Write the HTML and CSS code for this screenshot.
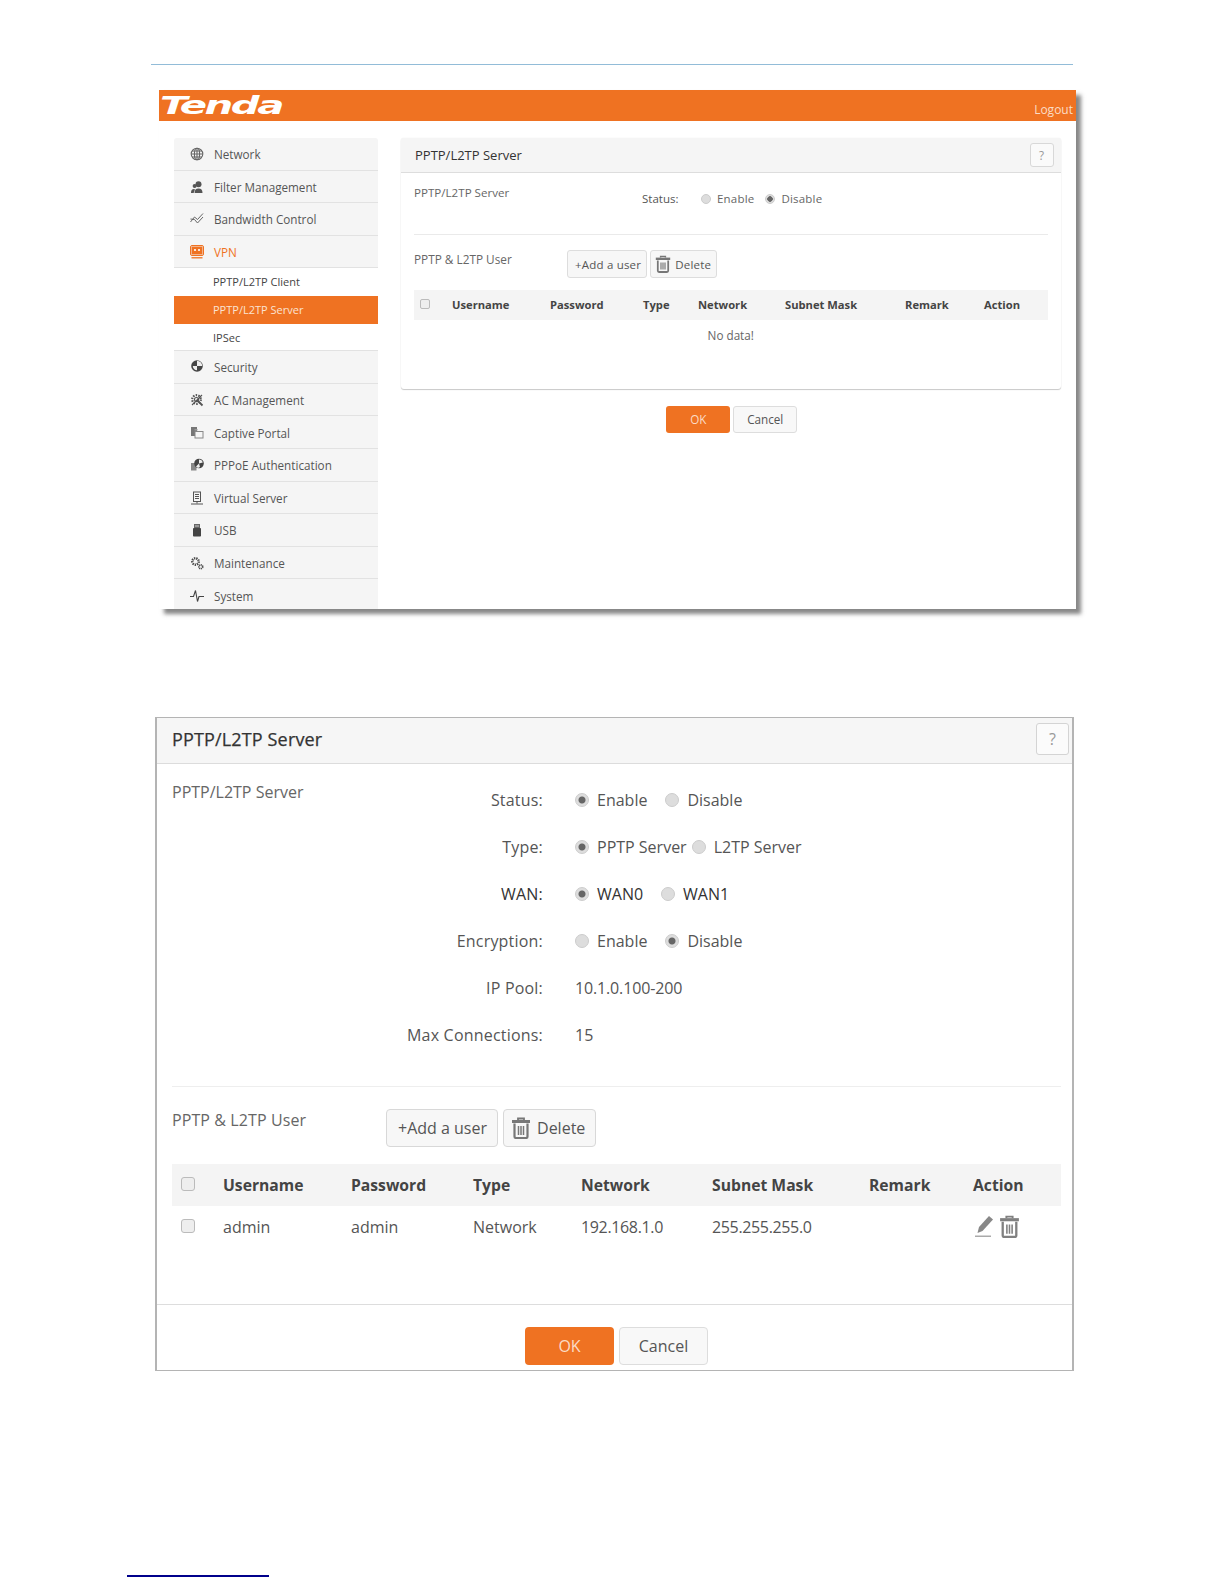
FILE: index.html
```html
<!DOCTYPE html>
<html lang="en">
<head>
<meta charset="utf-8">
<title>PPTP/L2TP Server</title>
<link rel="stylesheet" href="styles.css">
</head>
<body>
<div class="page-rule"></div>

<section class="shot">
  <header class="topbar">
    <span class="logo">Tenda</span>
    <a class="logout">Logout</a>
  </header>
  <div class="shot-body">
    <nav class="side">
      <div class="nav-item"><svg class="ic" viewBox="0 0 14 14" fill="none" stroke="#666" stroke-width="1.1"><circle cx="7" cy="7" r="5.8"/><ellipse cx="7" cy="7" rx="2.6" ry="5.8"/><path d="M1.2 7h11.6M2 4h10M2 10h10M7 1v12"/></svg>Network</div>
      <div class="nav-item"><svg class="ic" viewBox="0 0 14 14" fill="#555"><circle cx="8.5" cy="4.2" r="3"/><path d="M4.6 13c0-3 1.2-4.4 3.9-4.4s4 1.4 4 4.4z"/><circle cx="4.6" cy="6" r="2"/><path d="M1 13c0-2.6.9-4 3-4l1 .6-1.4 3.4z"/></svg>Filter Management</div>
      <div class="nav-item"><svg class="ic" viewBox="0 0 14 14" fill="none" stroke="#666" stroke-width="1"><path d="M.5 10l4-5 3 2.500L13 1.500"/><path d="M.5 7l4 .5 3 3.500 5.500-6"/></svg>Bandwidth Control</div>
      <div class="nav-item nav-active"><svg class="ic" viewBox="0 0 14 14"><rect x="0.500" y="0.500" width="13" height="10" rx="1.500" fill="none" stroke="#ef7222" stroke-width="1"/><rect x="1.500" y="1.500" width="11" height="8" fill="#ef7222"/><circle cx="5" cy="5" r="1.100" fill="#fff"/><circle cx="9" cy="5" r="1.100" fill="#fff"/><path d="M1.500 12.800h11" stroke="#ef7222" stroke-width="1.300"/></svg>VPN</div>
      <div class="nav-sub">PPTP/L2TP Client</div>
      <div class="nav-sub nav-sub-on">PPTP/L2TP Server</div>
      <div class="nav-sub nav-sub-last">IPSec</div>
      <div class="nav-item"><svg class="ic" viewBox="0 0 14 14"><circle cx="7" cy="6" r="5.800" fill="#444"/><path d="M7 6V.8a5.200 5.200 0 0 1 5.200 5.200zM7 6H2.800A4.200 4.200 0 0 0 7 10.200z" fill="#eee"/></svg>Security</div>
      <div class="nav-item"><svg class="ic" viewBox="0 0 14 14" fill="none" stroke="#555" stroke-width="1.100"><circle cx="6.500" cy="6.500" r="4.300" stroke-width="2.200" stroke-dasharray="1.500 1.200"/><circle cx="6.500" cy="6.500" r="2"/><path d="M7 7l5.500 5.500" stroke-width="1.800"/><path d="M12 2L2 12"/></svg>AC Management</div>
      <div class="nav-item"><svg class="ic" viewBox="0 0 14 14"><rect x="1" y="1" width="6" height="9" fill="#777"/><rect x="4.500" y="3" width="3" height="1.500" fill="#999"/><rect x="5" y="5.500" width="8" height="6.500" fill="#f5f5f5" stroke="#888"/></svg>Captive Portal</div>
      <div class="nav-item"><svg class="ic" viewBox="0 0 14 14"><rect x="1" y="5" width="5.500" height="7.500" fill="#888"/><circle cx="9" cy="5.500" r="4.800" fill="#444"/><path d="M9 5.500V1.500a4 4 0 0 1 3.800 3zM9 5.500L6 8.500l2 1.500 2-1z" fill="#eee"/></svg>PPPoE Authentication</div>
      <div class="nav-item"><svg class="ic" viewBox="0 0 14 14" fill="none" stroke="#555"><rect x="3.500" y="1" width="7" height="9.500"/><path d="M5 3.500h4M5 5.500h4M5 7.500h4M7 10.500v2M1 13h12"/></svg>Virtual Server</div>
      <div class="nav-item"><svg class="ic" viewBox="0 0 14 14"><rect x="3" y="5" width="8" height="8.500" rx=".8" fill="#444"/><rect x="4" y="1" width="6" height="4" fill="#666"/><path d="M5.500 2.200h1v1.500h-1zM7.500 2.200h1v1.500h-1z" fill="#eee"/></svg>USB</div>
      <div class="nav-item"><svg class="ic" viewBox="0 0 14 14" fill="none" stroke="#444"><circle cx="5.500" cy="5.500" r="3.200" stroke-width="2.400" stroke-dasharray="1.300 .9"/><circle cx="10.800" cy="10.800" r="1.900" stroke-width="1.700" stroke-dasharray="1 .6"/></svg>Maintenance</div>
      <div class="nav-item"><svg class="ic" viewBox="0 0 14 14" fill="none" stroke="#444" stroke-width="1.100"><path d="M0 7.500h3.500L5.500 1.500l2 11 1.500-5h5"/></svg>System</div>
    </nav>
    <div class="shot-main">
      <div class="card">
        <div class="card-head">
          <span class="card-title">PPTP/L2TP Server</span>
          <span class="help">?</span>
        </div>
        <div class="s-section">
          <div class="s-label">PPTP/L2TP Server</div>
          <div class="s-status">Status:</div>
          <span class="s-radio"></span><span class="s-opt">Enable</span>
          <span class="s-radio s-radio-on"></span><span class="s-opt">Disable</span>
        </div>
        <div class="s-users">
          <div class="s-users-label">PPTP &amp; L2TP User</div>
          <span class="s-btn">+Add a user</span>
          <span class="s-btn s-btn-del"><svg class="s-trash" viewBox="0 0 20 22" fill="none" stroke="#777" stroke-width="2.200"><path d="M7 3V1.500h6V3" stroke-width="1.800"/><path d="M1 4.500h18" stroke-width="3"/><path d="M3.500 6.500v13a1.500 1.500 0 0 0 1.500 1.500h10a1.500 1.500 0 0 0 1.500-1.500v-13"/><path d="M7.500 9v9M10 9v9M12.500 9v9" stroke-width="1.500"/></svg>Delete</span>
        </div>
        <div class="s-grid s-grid-head">
          <span class="s-check"></span><span>Username</span><span>Password</span><span>Type</span><span>Network</span><span>Subnet Mask</span><span>Remark</span><span>Action</span>
        </div>
        <div class="s-empty">No data!</div>
      </div>
      <div class="s-actions">
        <span class="s-ok">OK</span><span class="s-cancel">Cancel</span>
      </div>
    </div>
  </div>
</section>

<section class="full">
  <div class="full-head">
    <span class="full-title">PPTP/L2TP Server</span>
    <span class="full-help">?</span>
  </div>
  <div class="f-section">
    <div class="f-section-label">PPTP/L2TP Server</div>
    <div class="f-form">
      <div class="f-row"><span class="f-label">Status:</span><span class="radio radio-on"></span><span class="opt">Enable</span><span class="radio"></span><span class="opt">Disable</span></div>
      <div class="f-row"><span class="f-label">Type:</span><span class="radio radio-on"></span><span class="opt opt-tight">PPTP Server</span><span class="radio"></span><span class="opt">L2TP Server</span></div>
      <div class="f-row f-row-dark"><span class="f-label">WAN:</span><span class="radio radio-on"></span><span class="opt">WAN0</span><span class="radio"></span><span class="opt">WAN1</span></div>
      <div class="f-row"><span class="f-label">Encryption:</span><span class="radio"></span><span class="opt">Enable</span><span class="radio radio-on"></span><span class="opt">Disable</span></div>
      <div class="f-row"><span class="f-label">IP Pool:</span><span class="pool">10.1.0.100-200</span></div>
      <div class="f-row"><span class="f-label">Max Connections:</span><span>15</span></div>
    </div>
  </div>
  <div class="f-users">
    <div class="f-users-label">PPTP &amp; L2TP User</div>
    <span class="f-btn">+Add a user</span>
    <span class="f-btn f-btn-del"><svg class="f-trash" viewBox="0 0 20 22" fill="none" stroke="#777" stroke-width="2.200"><path d="M7 3V1.500h6V3" stroke-width="1.800"/><path d="M1 4.500h18" stroke-width="3"/><path d="M3.500 6.500v13a1.500 1.500 0 0 0 1.500 1.500h10a1.500 1.500 0 0 0 1.500-1.500v-13"/><path d="M7.500 9v9M10 9v9M12.500 9v9" stroke-width="1.500"/></svg>Delete</span>
  </div>
  <div class="f-grid f-grid-head">
    <span class="check"></span><span>Username</span><span>Password</span><span>Type</span><span>Network</span><span>Subnet Mask</span><span>Remark</span><span>Action</span>
  </div>
  <div class="f-grid f-grid-row">
    <span class="check"></span><span>admin</span><span>admin</span><span>Network</span><span class="num">192.168.1.0</span><span class="num">255.255.255.0</span><span></span>
    <span class="f-acts">
      <svg class="f-pencil" viewBox="0 0 18 21" fill="#888"><path d="M14 0L18 3.500 7.500 15 2.500 17l1.500-6z"/><path d="M0 19.500h16v1.500H0z" fill="#aaa"/></svg>
      <svg class="f-trash-lg" viewBox="0 0 20 22" fill="none" stroke="#808080" stroke-width="2.200"><path d="M7 3V1.500h6V3" stroke-width="1.800"/><path d="M1 4.500h18" stroke-width="3"/><path d="M3.500 6.500v13a1.500 1.500 0 0 0 1.500 1.500h10a1.500 1.500 0 0 0 1.500-1.500v-13"/><path d="M7.500 9v9M10 9v9M12.500 9v9" stroke-width="1.500"/></svg>
    </span>
  </div>
  <div class="f-foot">
    <span class="f-ok">OK</span><span class="f-cancel">Cancel</span>
  </div>
</section>

<div class="foot-rule"></div>
</body>
</html>
```
FILE: styles.css
```css
* { box-sizing: border-box; }
html, body { margin: 0; padding: 0; }
body {
  width: 1224px;
  height: 1584px;
  background: #fff;
  font-family: "Open Sans", "Liberation Sans", sans-serif;
  color: #555;
  overflow: hidden;
  padding-top: 64px;
}
.page-rule { width: 922px; height: 1px; margin-left: 151px; background: #92bcd8; }

/* ---------- first screenshot ---------- */
.shot {
  width: 917px;
  height: 519px;
  margin: 25px 0 0 159px;
  background: #fff;
  box-shadow: 5px 5px 4px rgba(70, 70, 70, .65);
  overflow: hidden;
  font-size: 11.700px;
}
.topbar {
  height: 31px;
  background: #ef7222;
  display: flex;
  justify-content: space-between;
  align-items: flex-end;
  padding: 0 3px 3px 1px;
}
.logo {
  display: inline-block;
  font: italic 700 24px/24px "DejaVu Sans", sans-serif;
  color: #fff;
  letter-spacing: -1.500px;
  transform: scaleX(1.680);
  transform-origin: left center;
  align-self: center;
  margin-top: 3px;
}
.logout { color: #fbdcc6; font-size: 12px; line-height: 16px; }
.shot-body { display: flex; padding: 17px 0 0 15px; align-items: flex-start; }
.side {
  width: 204px;
  flex: none;
  background: #f5f5f5;
  border-radius: 3px 3px 0 0;
}
.nav-item {
  height: 32.600px;
  display: flex;
  align-items: center;
  padding: 1px 0 0 16px;
  border-bottom: 1px solid #e2e2e2;
  color: #555;
}
.ic { width: 14px; height: 14px; flex: none; margin-right: 10px; }
.nav-active { color: #ef7222; }
.nav-sub {
  height: 27.600px;
  padding: 1px 0 0 39px;
  line-height: 26.600px;
  background: #fff;
  font-size: 11px;
  color: #444;
}
.nav-sub-on { background: #ef7222; color: #fbe3d2; }
.nav-sub-last { border-bottom: 1px solid #e2e2e2; }
.shot-main { width: 659.500px; margin-left: 23px; flex: none; }
.card {
  height: 251px;
  background: #fff;
  border-radius: 3px;
  box-shadow: 0 1px 1px #c8c8c8, 0 0 1px #ddd;
  padding: 0 13px 0 13px;
}
.card-head {
  height: 35px;
  margin: 0 -13px;
  padding: 0 7px 0 14px;
  background: #f5f5f5;
  border-bottom: 1px solid #ddd;
  border-radius: 3px 3px 0 0;
  display: flex;
  align-items: center;
  justify-content: space-between;
}
.card-title { font-size: 13px; color: #333; }
.help {
  width: 24px;
  height: 24px;
  border: 1px solid #d8d8d8;
  border-radius: 3px;
  background: #fafafa;
  text-align: center;
  line-height: 23px;
  color: #999;
}
.s-section {
  height: 62px;
  display: flex;
  align-items: flex-start;
  padding-top: 18px;
  border-bottom: 1px solid #eaeaea;
}
.s-label { width: 228px; margin-top: -6px; color: #666; font-size: 11.600px; }
.s-status { width: 59px; color: #555; font-size: 11.500px; }
.s-radio {
  width: 10px;
  height: 10px;
  margin: 3px 6px 0 0;
  border-radius: 50%;
  border: 1px solid #ccc;
  background: #ddd;
  flex: none;
}
.s-radio-on { background: radial-gradient(circle, #666 0 2.500px, #ddd 3px); }
.s-opt { margin-right: 11px; color: #666; font-size: 11.500px; letter-spacing: .2px; }
.s-users { height: 55px; padding-top: 15px; display: flex; align-items: flex-start; }
.s-users-label { width: 153px; margin-top: 1px; color: #666; font-size: 11.800px; }
.s-btn {
  height: 28px;
  padding: 0 5px 0 7px;
  margin-right: 3px;
  display: flex;
  align-items: center;
  border: 1px solid #ddd;
  border-radius: 3px;
  background: #f7f7f7;
  color: #555;
  font-size: 11.500px;
  letter-spacing: .2px;
}
.s-btn-del { padding-left: 4px; }
.s-trash { width: 16px; height: 18px; margin-right: 4px; }
.s-grid {
  display: grid;
  grid-template-columns: 38px 98px 93px 55px 87px 120px 79px 64px;
  align-items: center;
}
.s-grid-head {
  height: 30px;
  padding-bottom: 1px;
  background: #f4f4f4;
  font-size: 11.200px;
  font-weight: 700;
  color: #444;
}
.s-check {
  width: 10px;
  height: 10px;
  margin: -2px 0 0 6px;
  border: 1px solid #bbb;
  border-radius: 2px;
  background: #eee;
}
.s-empty { text-align: center; padding-top: 7px; line-height: 16px; color: #666; }
.s-actions { display: flex; justify-content: center; margin: 17px 0 0 0; padding-left: 2px; gap: 3px; }
.s-ok, .s-cancel {
  width: 64px;
  height: 27px;
  line-height: 26px;
  text-align: center;
  border-radius: 3px;
  font-size: 11.700px;
}
.s-ok { background: #ef7222; color: #fbdcc6; }
.s-cancel { border: 1px solid #ddd; background: #f8f8f8; color: #555; line-height: 24px; }

/* ---------- second panel ---------- */
.full {
  width: 919px;
  height: 654px;
  margin: 108px 0 0 155px;
  border: 2px solid #b4b4b4;
  border-width: 1.500px 2px;
  font-size: 16px;
  color: #555;
  background: #fff;
  display: flex;
  flex-direction: column;
}
.full-head {
  height: 46px;
  padding: 0 3px 4px 15px;
  background: #f6f6f6;
  border-bottom: 1px solid #dcdcdc;
  display: flex;
  align-items: center;
  justify-content: space-between;
  flex: none;
}
.full-title { font-size: 18px; letter-spacing: .15px; color: #333; -webkit-text-stroke: .25px #333; }
.full-help {
  width: 33px;
  height: 32px;
  border: 1px solid #d4d4d4;
  border-radius: 3px;
  background: #fbfbfb;
  color: #999;
  text-align: center;
  line-height: 30px;
}
.f-section {
  height: 323px;
  margin: 0 11px 0 15px;
  flex: none;
  display: flex;
  align-items: flex-start;
  border-bottom: 1px solid #eee;
}
.f-section-label { width: 0; white-space: nowrap; margin-top: 17px; color: #666; }
.f-form { padding-top: 12px; }
.f-row { height: 47px; display: flex; align-items: center; }
.f-row-dark { color: #333; }
.f-label { width: 371px; margin-right: 32px; text-align: right; flex: none; letter-spacing: .2px; }
.pool { letter-spacing: -.15px; }
.radio {
  width: 14px;
  height: 14px;
  margin-right: 8px;
  border-radius: 50%;
  border: 1px solid #ccc;
  background: #ddd;
  flex: none;
}
.radio-on { background: radial-gradient(circle, #666 0 3px, #ddd 4px); }
.opt { margin-right: 18px; }
.opt-tight { margin-right: 5px; }
.f-users {
  height: 77px;
  margin: 0 15px;
  padding-top: 22px;
  display: flex;
  align-items: flex-start;
  flex: none;
}
.f-users-label { width: 214px; color: #666; letter-spacing: .1px; }
.f-btn {
  height: 38px;
  padding: 0 10px 0 11px;
  margin-right: 5px;
  display: flex;
  align-items: center;
  border: 1px solid #d8d8d8;
  border-radius: 4px;
  background: #f7f7f7;
}
.f-btn-del { padding-left: 7px; }
.f-trash { width: 20px; height: 22px; margin-right: 6px; }
.f-grid {
  margin: 0 11px 0 15px;
  display: grid;
  grid-template-columns: 51px 128px 122px 108px 131px 157px 104px 88px;
  align-items: center;
  flex: none;
}
.f-grid-head { height: 42px; background: #f4f4f4; font-size: 15.700px; font-weight: 700; color: #444; }
.f-grid-row { height: 42px; }
.num { letter-spacing: -.35px; }
.check {
  width: 14px;
  height: 14px;
  margin: -3px 0 0 9px;
  border: 1px solid #bbb;
  border-radius: 3px;
  background: #eee;
}
.f-acts { display: flex; align-items: center; gap: 6px; padding: 0 0 2px 2px; }
.f-pencil { width: 18px; height: 21px; }
.f-trash-lg { width: 21px; height: 23px; }
.f-foot {
  margin-top: 56px;
  flex: 1;
  border-top: 1px solid #ddd;
  display: flex;
  justify-content: flex-start;
  gap: 5px;
  padding: 22px 0 0 368px;
}
.f-ok, .f-cancel {
  width: 89px;
  height: 38px;
  line-height: 38px;
  text-align: center;
  border-radius: 4px;
}
.f-ok { background: #ef7222; color: #fbdcc6; }
.f-cancel { border: 1px solid #ddd; background: #f8f8f8; line-height: 36px; }

.foot-rule { width: 142px; height: 1.500px; margin: 204px 0 0 127px; background: #00008b; }
```
